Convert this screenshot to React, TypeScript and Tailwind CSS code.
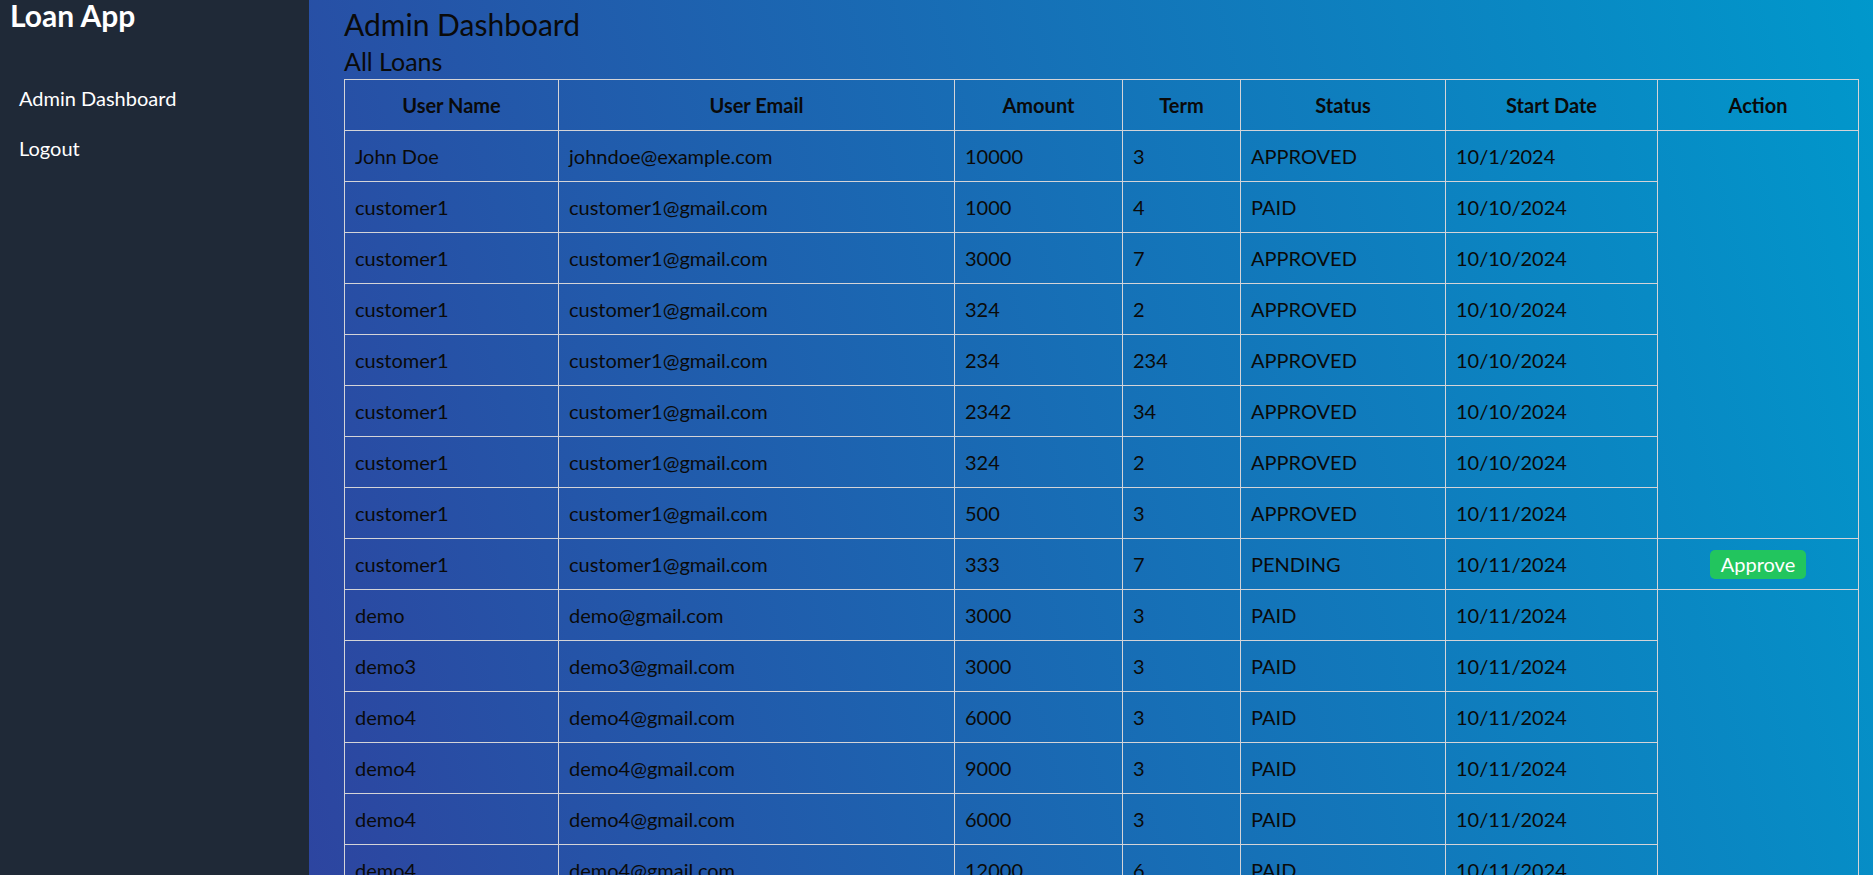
import React from "react";

type Loan = {
  name: string;
  email: string;
  amount: string;
  term: string;
  status: string;
  date: string;
};

const loans: Loan[] = [
  { name: "John Doe", email: "johndoe@example.com", amount: "10000", term: "3", status: "APPROVED", date: "10/1/2024" },
  { name: "customer1", email: "customer1@gmail.com", amount: "1000", term: "4", status: "PAID", date: "10/10/2024" },
  { name: "customer1", email: "customer1@gmail.com", amount: "3000", term: "7", status: "APPROVED", date: "10/10/2024" },
  { name: "customer1", email: "customer1@gmail.com", amount: "324", term: "2", status: "APPROVED", date: "10/10/2024" },
  { name: "customer1", email: "customer1@gmail.com", amount: "234", term: "234", status: "APPROVED", date: "10/10/2024" },
  { name: "customer1", email: "customer1@gmail.com", amount: "2342", term: "34", status: "APPROVED", date: "10/10/2024" },
  { name: "customer1", email: "customer1@gmail.com", amount: "324", term: "2", status: "APPROVED", date: "10/10/2024" },
  { name: "customer1", email: "customer1@gmail.com", amount: "500", term: "3", status: "APPROVED", date: "10/11/2024" },
  { name: "customer1", email: "customer1@gmail.com", amount: "333", term: "7", status: "PENDING", date: "10/11/2024" },
  { name: "demo", email: "demo@gmail.com", amount: "3000", term: "3", status: "PAID", date: "10/11/2024" },
  { name: "demo3", email: "demo3@gmail.com", amount: "3000", term: "3", status: "PAID", date: "10/11/2024" },
  { name: "demo4", email: "demo4@gmail.com", amount: "6000", term: "3", status: "PAID", date: "10/11/2024" },
  { name: "demo4", email: "demo4@gmail.com", amount: "9000", term: "3", status: "PAID", date: "10/11/2024" },
  { name: "demo4", email: "demo4@gmail.com", amount: "6000", term: "3", status: "PAID", date: "10/11/2024" },
  { name: "demo4", email: "demo4@gmail.com", amount: "12000", term: "6", status: "PAID", date: "10/11/2024" },
  { name: "demo4", email: "demo4@gmail.com", amount: "3000", term: "3", status: "PAID", date: "10/11/2024" },
];

const td = "border border-[#d4d4d8] px-[10px] py-[10px] text-left align-middle";
const th = "border border-[#d4d4d8] px-[10px] py-[10px] text-center font-bold";

export default function App() {
  return (
    <div
      className="flex h-screen w-full overflow-hidden text-[20px] leading-[30px]"
      style={{ fontFamily: "Lato, 'Noto Sans', sans-serif" }}
    >
      <aside className="flex w-[309px] shrink-0 flex-col bg-[#1f2937] text-white">
        <h1 className="pl-[10px] text-[30px] font-bold leading-[30px]">Loan App</h1>
        <nav className="mt-[53px] flex flex-col gap-[20px] pl-[19px]">
          <a className="cursor-pointer leading-[30px]">Admin Dashboard</a>
          <a className="cursor-pointer leading-[30px]">Logout</a>
        </nav>
      </aside>
      <main className="flex-1 bg-[linear-gradient(75deg,#2d45a0,#0099cc)] px-[35px] pt-[4px] text-[#0a0a0a]">
        <h2 className="text-[30px] leading-[40px]">Admin Dashboard</h2>
        <h3 className="text-[25px] leading-[35px]">All Loans</h3>
        <table className="w-[1514px] table-fixed border-collapse border border-[#d4d4d8]">
          <thead>
            <tr>
              <th className={`${th} w-[214px]`}>User Name</th>
              <th className={`${th} w-[396px]`}>User Email</th>
              <th className={`${th} w-[168px]`}>Amount</th>
              <th className={`${th} w-[118px]`}>Term</th>
              <th className={`${th} w-[205px]`}>Status</th>
              <th className={`${th} w-[212px]`}>Start Date</th>
              <th className={`${th} w-[201px]`}>Action</th>
            </tr>
          </thead>
          <tbody>
            {loans.map((l, i) => (
              <tr key={i}>
                <td className={td}>{l.name}</td>
                <td className={td}>{l.email}</td>
                <td className={td}>{l.amount}</td>
                <td className={td}>{l.term}</td>
                <td className={td}>{l.status}</td>
                <td className={td}>{l.date}</td>
                {l.status === "PENDING" ? (
                  <td className="border border-[#d4d4d8] px-[10px] py-[10px] text-center">
                    <button className="h-[29px] rounded-[5px] bg-[#22c55e] px-[11px] leading-[29px] text-white">
                      Approve
                    </button>
                  </td>
                ) : (
                  <td className="border-x border-[#d4d4d8]" />
                )}
              </tr>
            ))}
          </tbody>
        </table>
      </main>
    </div>
  );
}
